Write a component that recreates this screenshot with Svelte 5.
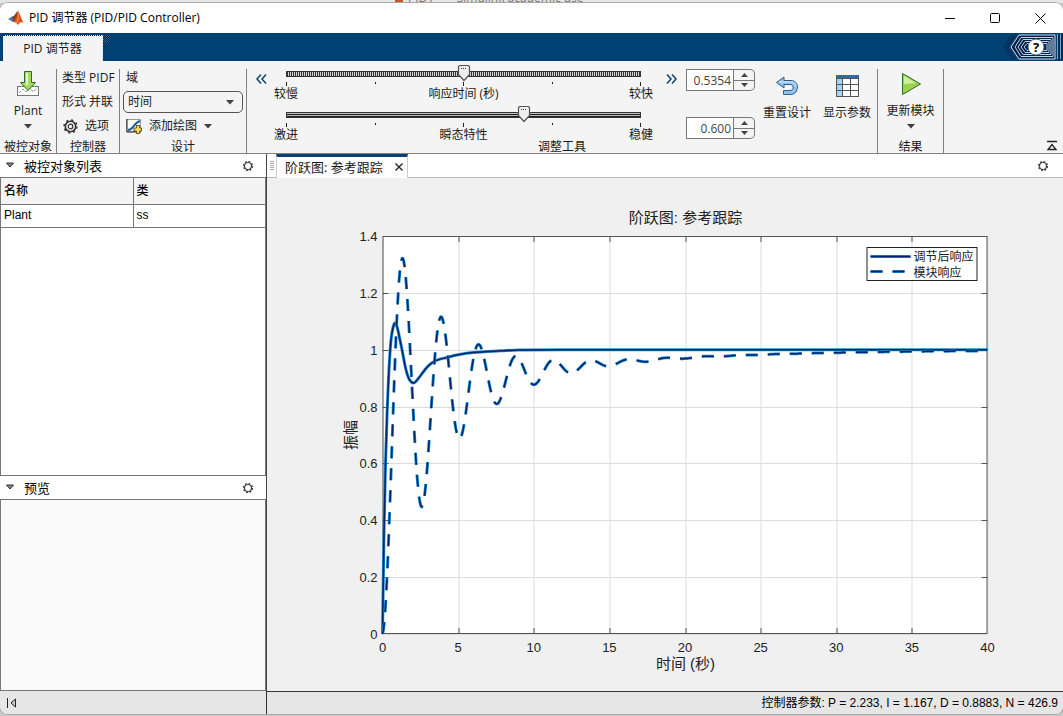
<script lang="ts">
  let responseTime = $state(50);
  let transient = $state(67);
  let domain = $state('时间');

  const sliders = [
    { id: 'response', left: '较慢', mid: '响应时间 (秒)', right: '较快' },
    { id: 'transient', left: '激进', mid: '瞬态特性', right: '稳健' }
  ];

  const plants = [{ name: 'Plant', type: 'ss' }];

  // plot area inside the figure's viewBox
  const plot = { x: 115, y: 58, w: 605, h: 398 };
  const xTicks = [0, 5, 10, 15, 20, 25, 30, 35, 40];
  const yTicks = [0, 0.2, 0.4, 0.6, 0.8, 1, 1.2, 1.4];

  const px = (t: number) => plot.x + (t / 40) * plot.w;
  const py = (v: number) => plot.y + plot.h - (v / 1.4) * plot.h;

  const tunedPoints = [
    [0, 0], [0.1, 0.36], [0.2, 0.6], [0.3, 0.77], [0.45, 0.95], [0.6, 1.05], [0.87, 1.093],
    [1.25, 1.01], [1.55, 0.93], [1.8, 0.893], [2.1, 0.884], [2.5, 0.908], [2.9, 0.936],
    [3.3, 0.955], [3.7, 0.965], [4.2, 0.972], [5, 0.982], [6, 0.99], [7.8, 0.996], [9, 0.999],
    [12, 1], [40, 1]
  ];

  function smooth(points: number[][]) {
    const p = points.map(([t, v]) => [px(t), py(v)]);
    let d = `M${p[0][0]} ${p[0][1]}`;
    for (let i = 0; i < p.length - 1; i++) {
      const a = p[Math.max(i - 1, 0)];
      const b = p[i];
      const c = p[i + 1];
      const e = p[Math.min(i + 2, p.length - 1)];
      // keep the tangents short where the spacing is uneven
      const k = (c[0] - b[0]) / 3;
      const m1 = (c[1] - a[1]) / (c[0] - a[0]);
      const m2 = (e[1] - b[1]) / (e[0] - b[0]);
      d += `C${b[0] + k} ${b[1] + m1 * k} ${c[0] - k} ${c[1] - m2 * k} ${c[0]} ${c[1]}`;
    }
    return d;
  }

  function block(t: number) {
    const lag = 0.38 * (t / 3.5) * Math.exp(1 - t / 3.5);
    return 1 - 0.21 * Math.exp(-0.1 * t) - 0.79 * Math.exp(-0.283 * t) * Math.cos(2.51 * t - lag)
      - 0.13 * t * Math.exp(-1.2 * t);
  }

  const tuned = smooth(tunedPoints);
  const blockPath = 'M' + Array.from({ length: 801 }, (_, i) => `${px(i / 20)} ${py(block(i / 20))}`).join('L');
</script>

{#snippet gear()}
  <svg width="12" height="12" viewBox="0 0 12 12">
    <circle cx="6" cy="6" r="3.500" fill="none" stroke="#444" stroke-width="1.200" />
    <circle cx="6" cy="6" r="4.500" fill="none" stroke="#333" stroke-width="1.200" stroke-dasharray="1.800 1.730" />
  </svg>
{/snippet}

{#snippet caret()}
  <svg width="8" height="5" viewBox="0 0 8 5"><path d="M0 0h8L4 4.500z" fill="#404040" /></svg>
{/snippet}

{#snippet collapse()}
  <svg width="10" height="7" viewBox="0 0 10 7"><path d="M1.500 1h7L5 5z" fill="#888" stroke="#333" /></svg>
{/snippet}

<div class="desktop">
  <div class="behind"><i></i><span>PID1 &nbsp; - &nbsp; Simulink academic use</span></div>
  <main class="window">
    <header class="titlebar">
      <svg width="16" height="14" viewBox="0 0 16 14">
        <path d="M0 8l5-3 3 2-3 4z" fill="#3d82b4" />
        <path d="M4 6c3-1 4-5 6-6L9 9l-4 2z" fill="#8e3b2b" />
        <path d="M10 0c2 2 3 8 6 12-3-2-4-1-6 2-1-2-3-3-5-3 3-2 4-7 5-11z" fill="#d95319" />
        <path d="M10 0c1 4 1 7 0 11l-2 1c2-3 2-8 2-12z" fill="#f6a04d" />
      </svg>
      <h1>PID 调节器 (PID/PID Controller)</h1>
      <button aria-label="最小化"><svg width="11" height="11" viewBox="0 0 11 11"><path d="M0 5.500h10" /></svg></button>
      <button aria-label="最大化"><svg width="11" height="11" viewBox="0 0 11 11"><rect x=".5" y=".5" width="9" height="9" rx="1" /></svg></button>
      <button aria-label="关闭"><svg width="11" height="11" viewBox="0 0 11 11"><path d="M.5.5l10 10M10.500.5l-10 10" /></svg></button>
    </header>

    <nav class="ribbon">
      <button class="ribbon-tab">PID 调节器</button>
      <span class="dots"></span>
      <button class="help" aria-label="帮助">
        <svg width="60" height="26" viewBox="0 0 60 26">
          <g fill="none" stroke="#061433" stroke-dasharray="1 1">
            <path d="M9 1L1 13l8 12M11 1L3 13l8 12M13 0L5 13l8 13" />
          </g>
          <path d="M54.500 0v26M57.500 0v26" stroke="#7fa6c8" stroke-dasharray="25 1" />
          <path d="M56 0v26M59 0v26" stroke="#061433" />
          <path d="M16 1h36v24H16L8 13z" fill="#0b1f45" stroke="#cfe4f5" />
          <g fill="none" stroke="#b9d7ee">
            <path d="M18 3.500h32v19H18l-6-9.500z" />
            <path d="M20 5.500h28v15H20L15 13z" />
            <path d="M22 7.500h24v11H22L18 13z" />
            <path d="M24 9.500h20v7H24L21 13z" />
          </g>
          <circle cx="33" cy="13" r="8" fill="#fff" stroke="#4d6684" />
          <text x="33" y="18" text-anchor="middle" class="q">?</text>
        </svg>
      </button>
    </nav>

    <div class="toolbar">
      <section class="plant">
        <div class="body">
          <button class="big">
            <svg width="24" height="28" viewBox="0 0 24 28">
              <rect x="1.500" y="16.500" width="21" height="9" fill="#fff" stroke="#777" />
              <path d="M3 23l4-4 3 3 4-4 3 4 4-4" fill="none" stroke="#555" stroke-dasharray="1 1" />
              <path d="M8.500 1.500h7v11h4L12 20.500 4.500 12.500h4z" fill="#a3d960" stroke="#2e6b1c" />
              <path d="M10 3h2v12h-2z" fill="#e4f7c8" />
            </svg>
            <span>Plant</span>
            {@render caret()}
          </button>
        </div>
        <h2>被控对象</h2>
      </section>

      <section class="controller">
        <div class="body rows">
          <span>类型 PIDF</span>
          <span>形式 并联</span>
          <button class="line">
            <svg width="15" height="15" viewBox="0 0 15 15">
              <circle cx="7.500" cy="7.500" r="5.200" fill="none" stroke="#333" stroke-width="1.600" />
              <circle cx="7.500" cy="7.500" r="6.500" fill="none" stroke="#333" stroke-width="1.400" stroke-dasharray="2.200 2.880" />
              <circle cx="7.500" cy="7.500" r="2.300" fill="none" stroke="#333" stroke-width="1.200" />
            </svg>
            选项
          </button>
        </div>
        <h2>控制器</h2>
      </section>

      <section class="design">
        <div class="body rows">
          <label for="domain">域</label>
          <div class="select">
            <select id="domain" bind:value={domain}>
              <option>时间</option>
              <option>频率</option>
            </select>
            {@render caret()}
          </div>
          <button class="line">
            <svg width="16" height="15" viewBox="0 0 16 15">
              <path d="M.5.5h14v12H.5z" fill="#fff" stroke="#999" />
              <path d="M1 0v13h14" fill="none" stroke="#222" />
              <path d="M2 11c6 0 5-7 12-9" fill="none" stroke="#1c5f9e" stroke-width="2" />
              <path d="M10.500 6.500h3v2.500h2v3h-2v2.500h-3v-2.500H8v-3h2.500z" fill="#f7dd6a" stroke="#6b5310" />
            </svg>
            添加绘图
            {@render caret()}
          </button>
        </div>
        <h2>设计</h2>
      </section>

      <section class="tuning">
        <div class="body tools">
          <button class="shift" aria-label="减小范围">
            <svg width="11" height="10" viewBox="0 0 11 10"><path d="M5 .5L1 5l4 4.500M10 .5L6 5l4 4.500" /></svg>
          </button>
          <div class="sliders">
            {#each sliders as s, i}
              <div class="slider">
                <div class="rail" class:lines={i === 1}>
                  {#if i === 0}
                    <input type="range" aria-label={s.mid} bind:value={responseTime} />
                  {:else}
                    <input type="range" aria-label={s.mid} bind:value={transient} />
                  {/if}
                  <svg class="thumb" style="left: {i === 0 ? responseTime : transient}%" width="14" height="18" viewBox="0 0 14 18">
                    <path d="M2.500 1.500h9l1 1v8L7 16.500l-5.500-6v-8z" fill="#eceef0" stroke="#555" stroke-width="1.200" />
                    <path d="M4 4.500h6" stroke="#333" stroke-dasharray="1 1" />
                  </svg>
                </div>
                <div class="ticks"><i></i><i></i><i></i><i></i><i></i></div>
                <div class="labels"><span>{s.left}</span><span>{s.mid}</span><span>{s.right}</span></div>
              </div>
            {/each}
          </div>
          <button class="shift" aria-label="增大范围">
            <svg width="11" height="10" viewBox="0 0 11 10"><path d="M1 .5L5 5 1 9.500M6 .5L10 5 6 9.500" /></svg>
          </button>
          <div class="spinners">
            {#each [['响应时间', '0.5354'], ['瞬态特性', '0.600']] as [label, value]}
              <div class="spinner">
                <input type="text" aria-label={label} {value} />
                <div class="steps">
                  <button aria-label="增加"><svg width="7" height="4" viewBox="0 0 7 4"><path d="M0 4h7L3.500 0z" /></svg></button>
                  <button aria-label="减少"><svg width="7" height="4" viewBox="0 0 7 4"><path d="M0 0h7L3.500 4z" /></svg></button>
                </div>
              </div>
            {/each}
          </div>
          <button class="big">
            <svg width="24" height="28" viewBox="0 0 24 28">
              <path d="M1.500 10.500L9 5v3.500h7c4 0 6.500 3 6.500 6.500s-2.500 7.500-6.500 7.500H8.500v-4H15c2 0 3-1.500 3-3s-1-3-3-3H9V16z" fill="#8fc1ea" stroke="#2c5f8e" />
              <path d="M4 10h12c3 0 5 2 5 5" fill="none" stroke="#d7ecfb" />
            </svg>
            <span>重置设计</span>
          </button>
          <button class="big">
            <svg width="24" height="28" viewBox="0 0 24 28">
              <rect x="1.500" y="3.500" width="22" height="21" fill="#fff" stroke="#555" />
              <rect x="2" y="7" width="5" height="17" fill="#a5d3f5" />
              <rect x="1" y="3" width="23" height="3" fill="#3465a4" />
              <path d="M1 6.500h23M1 12.500h23M1 18.500h23M7.500 6v18M15.500 6v18" stroke="#555" />
            </svg>
            <span>显示参数</span>
          </button>
        </div>
        <h2>调整工具</h2>
      </section>

      <section class="result">
        <div class="body">
          <button class="big">
            <svg width="24" height="28" viewBox="0 0 24 28">
              <path d="M3.500 3.500v21L21.500 14z" fill="#9bd350" stroke="#2c6e1f" />
              <path d="M5 6v8l12-1z" fill="#d2f0a2" />
            </svg>
            <span>更新模块</span>
            {@render caret()}
          </button>
        </div>
        <h2>结果</h2>
      </section>

      <button class="minimize" aria-label="折叠工具条">
        <svg width="12" height="11" viewBox="0 0 12 11"><path d="M1 1.500h10M6 4.500L2 9.500h8z" fill="none" stroke="#222" stroke-width="1.300" /></svg>
      </button>
    </div>

    <div class="workspace">
      <aside>
        <section class="list">
          <header class="panel-head">{@render collapse()}<h3>被控对象列表</h3><button aria-label="选项">{@render gear()}</button></header>
          <div class="frame white">
            <table>
              <thead><tr><th>名称</th><th>类</th></tr></thead>
              <tbody>
                {#each plants as p}
                  <tr><td>{p.name}</td><td>{p.type}</td></tr>
                {/each}
              </tbody>
            </table>
          </div>
        </section>
        <section class="preview">
          <header class="panel-head">{@render collapse()}<h3>预览</h3><button aria-label="选项">{@render gear()}</button></header>
          <div class="frame"></div>
        </section>
      </aside>

      <div class="document">
        <header class="doc-head">
          <span class="grip"></span>
          <div class="doc-tab">
            <span>阶跃图: 参考跟踪</span>
            <button aria-label="关闭"><svg width="8" height="8" viewBox="0 0 8 8"><path d="M.5.5l7 7M7.500.5l-7 7" stroke="#222" stroke-width="1.400" /></svg></button>
          </div>
          <button class="doc-gear" aria-label="选项">{@render gear()}</button>
        </header>
        <svg class="figure" viewBox="0 0 795 513" role="img" aria-label="阶跃图: 参考跟踪">
          <text class="title" x="418" y="45">阶跃图: 参考跟踪</text>
          <rect x={plot.x} y={plot.y} width={plot.w} height={plot.h} fill="#fff" />
          <g class="grid">
            {#each xTicks as t}<path d="M{Math.round(px(t)) + 0.5} {plot.y}v{plot.h}" />{/each}
            {#each yTicks as v}<path d="M{plot.x} {Math.round(py(v)) + 0.5}h{plot.w}" />{/each}
          </g>
          <g class="axis">
            <rect x={plot.x + 0.5} y={plot.y + 0.5} width={plot.w - 1} height={plot.h - 1} />
            {#each xTicks.slice(1, -1) as t}
              <path d="M{Math.round(px(t)) + 0.5} {plot.y}v6m0 {plot.h - 12}v6" />
            {/each}
            {#each yTicks.slice(1, -1) as v}
              <path d="M{plot.x} {Math.round(py(v)) + 0.5}h6m{plot.w - 12} 0h6" />
            {/each}
            {#each xTicks as t}<text x={px(t)} y="474">{t}</text>{/each}
            {#each yTicks as v}<text class="y" x="110" y={py(v) + 5}>{v}</text>{/each}
          </g>
          <text class="title" x="418" y="491">时间 (秒)</text>
          <text class="title" transform="translate(88 257) rotate(-90)">振幅</text>
          <path class="halo" d={tuned} />
          <path class="core" d={tuned} />
          <path class="halo dash" d={blockPath} />
          <path class="core dash" d={blockPath} />
          <rect x="599.500" y="69.500" width="110" height="33" fill="#fff" stroke="#222" />
          <path class="halo" d="M603 78.500h40" />
          <path class="core" d="M603 78.500h40" />
          <path class="halo dash" d="M603 93.500h40" />
          <path class="core dash" d="M603 93.500h40" />
          <text class="legend" x="646" y="83">调节后响应</text>
          <text class="legend" x="646" y="99">模块响应</text>
        </svg>
      </div>
    </div>

    <footer class="status">
      <button aria-label="折叠面板">
        <svg width="11" height="10" viewBox="0 0 11 10"><path d="M1.500 0v10M9.500 1v8L5 5z" fill="#ccc" stroke="#222" /></svg>
      </button>
      <span>控制器参数: P = 2.233, I = 1.167, D = 0.8883, N = 426.9</span>
    </footer>
  </main>
</div>

<style>
  :global(body) {
    margin: 0;
  }

  .desktop {
    display: flex;
    flex-direction: column;
    box-sizing: border-box;
    height: 100vh;
    min-height: 480px;
    padding-bottom: 2px;
    background: #c8c8c8;
    color: #1a1a1a;
    font: 12px/16px 'Open Sans', 'Noto Sans CJK SC', sans-serif;
  }

  .desktop * {
    box-sizing: border-box;
  }

  button {
    padding: 0;
    border: none;
    background: none;
    color: inherit;
    font: inherit;
  }

  svg {
    display: block;
    flex: none;
  }

  h1, h2, h3 {
    margin: 0;
    font: inherit;
  }

  .behind {
    display: flex;
    align-items: flex-end;
    height: 3px;
    padding-left: 395px;
    overflow: hidden;
    white-space: nowrap;
    background: #e6e6e6;
    color: #777;
    flex: none;
  }

  .behind i {
    width: 8px;
    height: 3px;
    margin-right: 5px;
    background: #c8552b;
  }

  .behind span {
    margin-bottom: -3px;
  }

  .window {
    display: flex;
    flex-direction: column;
    flex: 1;
    min-height: 0;
    overflow: hidden;
    border-radius: 8px;
    background: #f4f4f4;
    box-shadow: 0 0 0 1px #a9a9a9;
  }

  .titlebar {
    display: flex;
    align-items: center;
    height: 30px;
    padding-left: 8px;
    background: #fff;
    color: #000;
    flex: none;
  }

  .titlebar h1 {
    flex: 1;
    margin-left: 5px;
  }

  .titlebar button {
    display: flex;
    align-items: center;
    justify-content: center;
    width: 45px;
    height: 30px;
  }

  .titlebar button svg {
    fill: none;
    stroke: #000;
  }

  .ribbon {
    display: flex;
    align-items: flex-end;
    height: 28px;
    padding-left: 3px;
    background: #004073;
    flex: none;
  }

  .ribbon-tab {
    width: 100px;
    height: 26px;
    border-top: 1px dotted #001d3d;
    border-right: 1px dotted #d5e2ec;
    background: #f4f4f4;
  }

  .dots {
    align-self: flex-start;
    width: 8px;
    height: 8px;
    margin-top: 2px;
    background: repeating-conic-gradient(#001d3d 0 25%, #2f6797 0 50%) 0 0 / 2px 2px;
    clip-path: polygon(0 0, 100% 0, 100% 50%, 50% 100%, 0 100%);
  }

  .help {
    align-self: center;
    margin-left: auto;
  }

  .q {
    font: bold 13px 'Open Sans', sans-serif;
  }

  .toolbar {
    display: flex;
    height: 93px;
    padding-top: 8px;
    border-bottom: 1px solid #808080;
    background: #f4f4f4;
    flex: none;
  }

  .toolbar section {
    display: flex;
    flex-direction: column;
    border-right: 1px solid #808080;
  }

  .toolbar .body {
    flex: 1;
    min-height: 0;
    padding-top: 1px;
  }

  .toolbar h2 {
    height: 16px;
    text-align: center;
    line-height: 20px;
    white-space: nowrap;
  }

  .plant {
    width: 57px;
  }

  .controller {
    width: 63px;
  }

  .design {
    width: 127px;
  }

  .result {
    width: 66px;
  }

  .tuning {
    flex: 1;
  }

  .big {
    display: flex;
    flex-direction: column;
    align-items: center;
    gap: 5px;
    width: 100%;
    white-space: nowrap;
  }

  .rows {
    display: flex;
    flex-direction: column;
    gap: 8px;
    padding-left: 5px;
    white-space: nowrap;
  }

  .line {
    display: flex;
    align-items: center;
    gap: 7px;
    height: 16px;
  }

  .controller .line {
    padding-left: 1px;
  }

  .design .body {
    gap: 5px;
    padding-right: 3px;
    padding-left: 3px;
  }

  .design label,
  .design .line {
    padding-left: 3px;
  }

  .select {
    display: flex;
    align-items: center;
    height: 22px;
    padding-right: 8px;
    border: 1px solid #555;
    border-radius: 5px;
  }

  select {
    flex: 1;
    appearance: none;
    padding: 0 4px;
    border: none;
    background: none;
    color: inherit;
    font: inherit;
  }

  .toolbar .tools {
    display: flex;
    align-items: flex-start;
    padding: 0 0 0 9px;
  }

  .tools .big {
    width: 60px;
    padding-top: 3px;
  }

  .shift {
    margin-top: 5px;
  }

  .shift svg {
    fill: none;
    stroke: #12406e;
    stroke-width: 1.5px;
  }

  .sliders {
    flex: 1;
    margin: 0 25px 0 19px;
  }

  .sliders + .shift {
    margin-right: 9px;
  }

  .slider {
    height: 41px;
  }

  .rail {
    position: relative;
    height: 13px;
  }

  .rail::before {
    content: '';
    position: absolute;
    inset: 2px 0 5px;
    border: 1px solid #333;
    background: repeating-linear-gradient(90deg, #333 0 1px, #d5d5d5 1px 2px);
  }

  .rail.lines::before {
    background: repeating-linear-gradient(#bbb 0 1px, #222 1px 2px);
  }

  .rail input {
    position: absolute;
    left: -7px;
    width: calc(100% + 14px);
    height: 13px;
    margin: 0;
    opacity: 0;
  }

  .thumb {
    position: absolute;
    top: -5px;
    margin-left: -7px;
    pointer-events: none;
  }

  .ticks {
    display: flex;
    justify-content: space-between;
    height: 4px;
  }

  .ticks i {
    width: 1px;
    height: 2px;
    background: #222;
  }

  .ticks i:nth-child(odd) {
    height: 4px;
  }

  .labels {
    display: grid;
    grid-template-columns: 1fr auto 1fr;
    margin: 0 -12px;
  }

  .labels span:last-child {
    text-align: right;
  }

  .spinners {
    display: flex;
    flex-direction: column;
    gap: 26px;
    width: 69px;
    margin-right: 2px;
  }

  .spinner {
    display: flex;
    height: 22px;
  }

  .spinner input {
    width: 48px;
    padding: 2px 2px 0 0;
    border: 1px solid #777;
    background: #fff;
    color: #444;
    font: inherit;
    text-align: right;
  }

  .steps {
    display: flex;
    flex-direction: column;
    flex: 1;
    border: 1px solid #777;
    border-left: none;
    border-radius: 0 5px 5px 0;
  }

  .steps button {
    display: flex;
    align-items: center;
    justify-content: center;
    flex: 1;
  }

  .steps button + button {
    border-top: 1px solid #777;
  }

  .steps path {
    fill: #444;
  }

  .minimize {
    align-self: flex-end;
    width: 119px;
    padding: 0 5px 2px;
    flex: none;
  }

  .minimize svg {
    margin-left: auto;
  }

  .workspace {
    display: flex;
    flex: 1;
    min-height: 0;
  }

  aside {
    display: flex;
    flex-direction: column;
    width: 267px;
    border-right: 1px solid #444;
    flex: none;
  }

  aside section {
    display: flex;
    flex-direction: column;
    min-height: 0;
  }

  .list {
    flex: 3 0 0;
  }

  .preview {
    flex: 2 0 0;
  }

  .panel-head {
    display: flex;
    align-items: center;
    height: 23px;
    padding: 0 12px 0 5px;
    background: #fff;
    color: #000;
    font-size: 13px;
    flex: none;
  }

  .panel-head h3 {
    flex: 1;
    margin-left: 9px;
  }

  .frame {
    flex: 1;
    border: 1px solid #777;
    background: #fafafa;
  }

  .frame.white {
    background: #fff;
  }

  table {
    width: 100%;
    border-collapse: collapse;
    table-layout: fixed;
    color: #000;
    font: 12px/16px 'Liberation Sans', 'Noto Sans CJK SC', sans-serif;
  }

  th, td {
    height: 23px;
    padding: 0 3px 2px;
    border-bottom: 1px solid #777;
    text-align: left;
  }

  th {
    height: 26px;
    padding-bottom: 0;
    background: #f4f4f4;
    font-weight: 500;
  }

  th + th,
  td + td {
    border-left: 1px solid #777;
  }

  .document {
    display: flex;
    flex-direction: column;
    flex: 1;
    min-width: 0;
    background: #f0f0f0;
  }

  .doc-head {
    display: flex;
    align-items: center;
    height: 24px;
    padding-right: 14px;
    border-bottom: 1px solid #bbb;
    background: #fff;
    flex: none;
  }

  .grip {
    width: 4px;
    height: 10px;
    margin: 0 2px 0 3px;
    background: repeating-linear-gradient(#aaa 0 1px, #fff 1px 2px);
  }

  .doc-tab {
    display: flex;
    align-items: center;
    gap: 12px;
    height: 24px;
    padding: 0 4px 0 8px;
    border: 1px solid #ccc;
    border-top: 3px solid #0b3f78;
    border-bottom: none;
    background: #fff;
    font-size: 13px;
  }

  .doc-gear {
    margin-left: auto;
  }

  .figure {
    flex: 1;
    width: 100%;
    min-height: 0;
  }

  .figure text {
    fill: #222;
    font: 13px 'Liberation Sans', 'Noto Sans CJK SC', sans-serif;
    text-anchor: middle;
  }

  .figure text.y {
    text-anchor: end;
  }

  .figure text.title {
    font-size: 15px;
  }

  .figure text.legend {
    font-size: 12px;
    text-anchor: start;
  }

  .grid path {
    stroke: #dcdcdc;
  }

  .axis rect,
  .axis path {
    fill: none;
    stroke: #555;
  }

  .halo {
    fill: none;
    stroke: #2288cc;
    stroke-width: 3px;
  }

  .core {
    fill: none;
    stroke: #00256b;
    stroke-width: 1.5px;
  }

  .dash {
    stroke-dasharray: 12 10;
  }

  .status {
    display: flex;
    align-items: center;
    height: 23px;
    background: #e6e6e6;
    color: #000;
    font: 12px/16px 'Liberation Sans', 'Noto Sans CJK SC', sans-serif;
    flex: none;
  }

  .status button {
    width: 267px;
    height: 23px;
    padding-left: 6px;
    border-right: 1px solid #333;
  }

  .status span {
    flex: 1;
    height: 23px;
    padding: 3px 5px 0 0;
    border-top: 1px solid #333;
    text-align: right;
  }
</style>
